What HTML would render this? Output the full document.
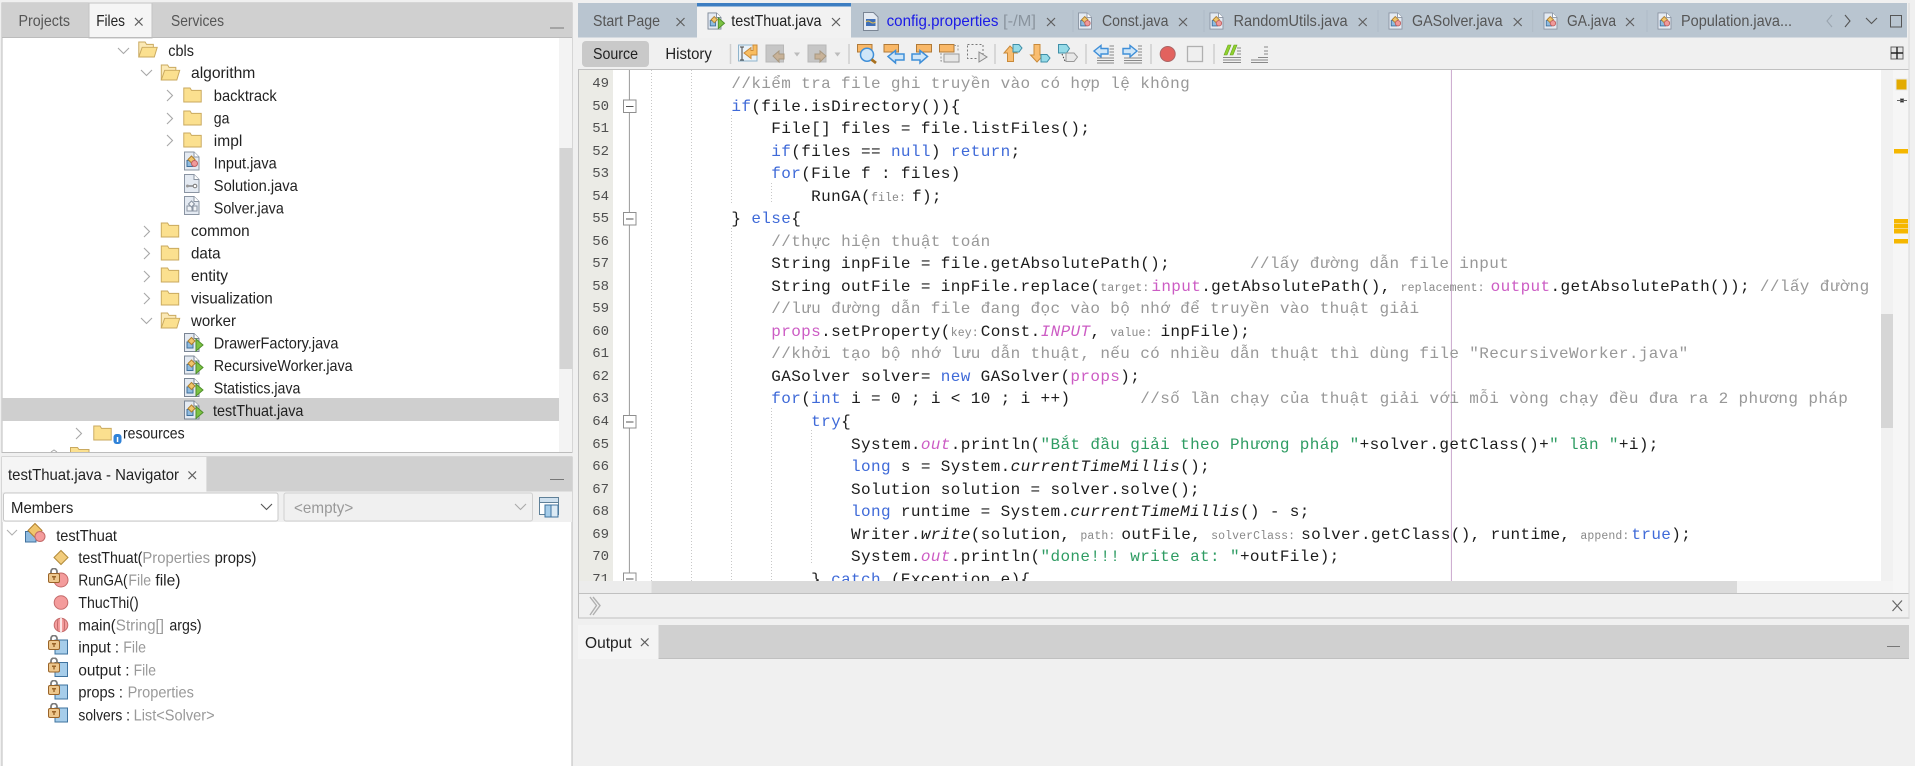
<!DOCTYPE html>
<html><head><meta charset="utf-8"><title>NetBeans</title>
<style>
html,body{margin:0;padding:0;background:#f0f0f0;width:1915px;height:766px;overflow:hidden}
#root{position:relative;width:1915px;height:766px;overflow:hidden}
svg{position:absolute;left:0;top:0}
svg text{font-family:"Liberation Sans",sans-serif;font-size:16px;fill:#222}
svg text.g{fill:#999}
svg text.d{fill:#555}
#code,#nums{position:absolute;margin:0;font-family:"Liberation Mono",monospace;white-space:pre;line-height:22.53px}
#clip{position:absolute;left:651.6px;top:71px;width:1229px;height:510px;overflow:hidden}
#code{left:0;top:2px;font-size:16px;letter-spacing:.37px;color:#1c1c1c}
#nc{position:absolute;left:578px;top:71px;width:31px;height:510px;overflow:hidden}
#nums{left:0;top:2px;width:31px;text-align:right;font-size:14px;color:#4f4f4f}
.c{color:#989898}.k{color:#3f6ad8}.s{color:#2f9c63}.f{color:#cc5cc4}.i{font-style:italic}
.h{font-size:11.5px;letter-spacing:.1px;color:#888;line-height:0;margin-right:6px}
.n{margin-right:2px}
</style></head><body><div id="root">
<svg width="1915" height="766" viewBox="0 0 1915 766" xmlns="http://www.w3.org/2000/svg">
<defs>
<symbol id="fc" viewBox="0 0 19 16"><path d="M.5 15.5V1h6.5l1.500 2.500h10v12z" fill="#fbe08f" stroke="#c9a95f"/></symbol>
<symbol id="fo" viewBox="0 0 20 17"><path d="M.5 16.500V1h6.500l1.500 2.500h7v3" fill="#fbe9b5" stroke="#c9a95f"/><path d="M.5 16.500L4 6.500h15.500l-3 10z" fill="#fbe08f" stroke="#c9a95f"/></symbol>
<symbol id="cl" viewBox="0 0 20 19"><path d="M.5.5h9.500l5 5v13H.5z" fill="#e4eaf2" stroke="#8a94a2"/><path d="M10 .5v5h5" fill="#fff" stroke="#8a94a2"/><rect x="3" y="9" width="6" height="6" fill="#8fbbe0" stroke="#40709c"/><path d="M7.500 4.500l3.500 3.500-3.500 3.500L4 8z" fill="#f0c56c" stroke="#b08030"/><circle cx="10.500" cy="12" r="3" fill="#f09a9a" stroke="#c06060"/></symbol>
<symbol id="ru" viewBox="0 0 20 19"><path d="M.5.5h9.500l5 5v13H.5z" fill="#e4eaf2" stroke="#7a8594"/><path d="M10 .5v5h5" fill="#fff" stroke="#7a8594"/><rect x="3" y="9" width="6" height="6" fill="#8fbbe0" stroke="#40709c"/><path d="M7.500 4.500l3.500 3.500-3.500 3.500L4 8z" fill="#f0c56c" stroke="#b08030"/><path d="M12 6l7 6-7 6z" fill="#7cc243" stroke="#4e8f2a"/></symbol>
<symbol id="lk" viewBox="0 0 12 15"><path d="M3 6V3.500a3 3 0 0 1 6 0V6" fill="none" stroke="#7c7c7c" stroke-width="1.800"/><rect x=".5" y="5.500" width="11" height="9" rx="1.500" fill="#edc78d" stroke="#9a6428"/><rect x="4" y="8" width="4" height="1.500" fill="#9a6428"/><rect x="5.300" y="9" width="1.400" height="3" fill="#9a6428"/></symbol>
<symbol id="x" viewBox="0 0 10 10"><path d="M1 1l8 8M9 1l-8 8" stroke="#5f5f5f" stroke-width="1.200" fill="none"/></symbol>
</defs>

<!-- LEFT TOP PANEL -->
<rect x="2" y="3" width="570" height="449.500" fill="#fff" stroke="#bcbcbc"/>
<rect x="2" y="3" width="570" height="34.500" fill="#d0d0d0"/>
<rect x="89" y="3" width="63" height="35" fill="#f5f5f5" stroke="#c4c4c4"/>
<line x1="2" y1="37.500" x2="572" y2="37.500" stroke="#bcbcbc"/>
<text class="d" x="18.500" y="26" textLength="51.500" lengthAdjust="spacingAndGlyphs">Projects</text>
<text x="96.200" y="26" textLength="28.800" lengthAdjust="spacingAndGlyphs">Files</text>
<use href="#x" x="134" y="17" width="9.500" height="9.500"/>
<text class="d" x="171" y="26" textLength="53" lengthAdjust="spacingAndGlyphs">Services</text>
<line x1="550" y1="28" x2="564" y2="28" stroke="#777"/>
<rect x="559" y="38" width="13" height="414" fill="#f3f3f3"/>
<rect x="559.500" y="148" width="12.500" height="221" fill="#d4d4d4"/>
<rect x="2" y="398" width="557" height="23" fill="#cfcfcf"/>

<g fill="none" stroke="#a8a8a8" stroke-width="1.100">
<path d="M118 48l5.500 5.500 5.500-5.500M141 70l5.500 5.500 5.500-5.500M141 318l5.500 5.500 5.500-5.500"/>
<path d="M167 90l5.500 5.500-5.500 5.500M167 113l5.500 5.500-5.500 5.500M167 135l5.500 5.500-5.500 5.500"/>
<path d="M144 226l5.500 5.500-5.500 5.500M144 248l5.500 5.500-5.500 5.500M144 271l5.500 5.500-5.500 5.500M144 293l5.500 5.500-5.500 5.500"/>
<path d="M76 428l5.500 5.500-5.500 5.500"/>
</g>
<use href="#fo" x="138" y="41" width="20" height="16.500"/>
<use href="#fo" x="160.500" y="64" width="20" height="16.500"/>
<use href="#fc" x="183" y="87" width="19" height="15.500"/>
<use href="#fc" x="183" y="110" width="19" height="15.500"/>
<use href="#fc" x="183" y="132" width="19" height="15.500"/>
<use href="#cl" x="184" y="151.500" width="20" height="19"/>
<g><path d="M184.500 174.500h9.500l5 5v13h-14.500z" fill="#e4eaf2" stroke="#8a94a2"/><path d="M194 174.500v5h5" fill="#fff" stroke="#8a94a2"/><path d="M187 186h6" stroke="#777" stroke-width="1.300"/><circle cx="195" cy="186" r="1.800" fill="#fff" stroke="#777"/><circle cx="187.500" cy="186" r="1.500" fill="#999"/></g>
<g><path d="M184.500 196.500h9.500l5 5v13h-14.500z" fill="#e4eaf2" stroke="#8a94a2"/><path d="M194 196.500v5h5" fill="#fff" stroke="#8a94a2"/><rect x="187" y="206" width="5" height="5" fill="#f2f5f8" stroke="#8a94a2"/><rect x="193" y="206" width="4" height="5" fill="#f2f5f8" stroke="#8a94a2"/><path d="M191.500 201l3 3-3 3-3-3z" fill="#f2f5f8" stroke="#8a94a2"/></g>
<use href="#fc" x="160.500" y="222" width="19" height="15.500"/>
<use href="#fc" x="160.500" y="245" width="19" height="15.500"/>
<use href="#fc" x="160.500" y="267" width="19" height="15.500"/>
<use href="#fc" x="160.500" y="290" width="19" height="15.500"/>
<use href="#fo" x="160.500" y="312" width="20" height="16.500"/>
<use href="#ru" x="184" y="333" width="20" height="19"/>
<use href="#ru" x="184" y="355.500" width="20" height="19"/>
<use href="#ru" x="184" y="378" width="20" height="19"/>
<use href="#ru" x="184" y="400.500" width="20" height="19"/>
<use href="#fc" x="93" y="425" width="19" height="15.500"/>
<rect x="113.500" y="434" width="8" height="10" rx="3" fill="#2f82d8"/><rect x="116.800" y="437" width="1.500" height="5" fill="#fff"/>
<path d="M70.500 452v-4.500h7l1.500 2h10v2.500" fill="#fbe08f" stroke="#c9a95f"/>
<path d="M51 452l3-2 3 2" fill="none" stroke="#a8a8a8"/>

<text x="168.300" y="56" textLength="25.600" lengthAdjust="spacingAndGlyphs">cbls</text>
<text x="191" y="78" textLength="64.300" lengthAdjust="spacingAndGlyphs">algorithm</text>
<text x="213.800" y="101" textLength="62.900" lengthAdjust="spacingAndGlyphs">backtrack</text>
<text x="213.800" y="123.500" textLength="15.600" lengthAdjust="spacingAndGlyphs">ga</text>
<text x="213.800" y="146" textLength="28.500" lengthAdjust="spacingAndGlyphs">impl</text>
<text x="213.800" y="168.500" textLength="62.900" lengthAdjust="spacingAndGlyphs">Input.java</text>
<text x="213.800" y="191" textLength="84" lengthAdjust="spacingAndGlyphs">Solution.java</text>
<text x="213.800" y="213.500" textLength="70" lengthAdjust="spacingAndGlyphs">Solver.java</text>
<text x="191" y="236" textLength="58.700" lengthAdjust="spacingAndGlyphs">common</text>
<text x="191" y="258.500" textLength="29.500" lengthAdjust="spacingAndGlyphs">data</text>
<text x="191" y="281" textLength="37" lengthAdjust="spacingAndGlyphs">entity</text>
<text x="191" y="303.500" textLength="81.700" lengthAdjust="spacingAndGlyphs">visualization</text>
<text x="191" y="326" textLength="45" lengthAdjust="spacingAndGlyphs">worker</text>
<text x="213.800" y="348.500" textLength="124.700" lengthAdjust="spacingAndGlyphs">DrawerFactory.java</text>
<text x="213.800" y="371" textLength="138.800" lengthAdjust="spacingAndGlyphs">RecursiveWorker.java</text>
<text x="213.800" y="393.500" textLength="86.600" lengthAdjust="spacingAndGlyphs">Statistics.java</text>
<text x="213" y="416" textLength="90.400" lengthAdjust="spacingAndGlyphs">testThuat.java</text>
<text x="123" y="438.500" textLength="61.600" lengthAdjust="spacingAndGlyphs">resources</text>

<!-- NAVIGATOR -->
<rect x="2" y="457" width="570" height="320" fill="#fff" stroke="#bcbcbc"/>
<rect x="2" y="457" width="570" height="65" fill="#f0f0f0"/>
<rect x="2" y="457" width="570" height="34.500" fill="#d0d0d0"/>
<rect x="2" y="457" width="204.400" height="35" fill="#f5f5f5"/>
<text x="8" y="480" textLength="171" lengthAdjust="spacingAndGlyphs">testThuat.java - Navigator</text>
<use href="#x" x="187.500" y="470.500" width="9.500" height="9.500"/>
<line x1="550" y1="479.500" x2="564" y2="479.500" stroke="#777"/>
<rect x="3.500" y="493" width="274.500" height="28" rx="2" fill="#fff" stroke="#c8c8c8"/>
<text x="11" y="513" textLength="62.300" lengthAdjust="spacingAndGlyphs">Members</text>
<path d="M261 504l5.500 5.500 5.500-5.500" fill="none" stroke="#555" stroke-width="1.100"/>
<rect x="284" y="493" width="248.500" height="28" rx="2" fill="#f0f0f0" stroke="#d0d0d0"/>
<text class="g" x="294" y="513" textLength="59.300" lengthAdjust="spacingAndGlyphs">&lt;empty&gt;</text>
<path d="M515 504l5.500 5.500 5.500-5.500" fill="none" stroke="#aaa" stroke-width="1.100"/>
<g><rect x="539.500" y="497.500" width="19" height="5" fill="#cfe0ee" stroke="#5f8098"/><rect x="539.500" y="502.500" width="19" height="12" fill="#fff" stroke="#5f8098"/><rect x="545" y="505" width="6" height="12" fill="#a6cdea" stroke="#3f739f"/><rect x="551" y="505" width="7" height="12" fill="#dceaf4" stroke="#3f739f"/></g>

<path d="M7 530l5 5 5-5" fill="none" stroke="#b0b0b0" stroke-width="1.100"/>
<rect x="25.500" y="531.500" width="10.500" height="10.500" fill="#8fbbe0" stroke="#40709c"/>
<path d="M35 523.500l7 7-7 7-7-7z" fill="#f0c56c" stroke="#b08030"/>
<circle cx="40" cy="536.500" r="5" fill="#f49c9c" stroke="#c46a6a"/>
<text x="56.200" y="541" textLength="60.800" lengthAdjust="spacingAndGlyphs">testThuat</text>

<path d="M61 550.500l7 7-7 7-7-7z" fill="#f2cc7c" stroke="#b08a3a"/>
<text x="78.400" y="563" textLength="64" lengthAdjust="spacingAndGlyphs">testThuat(</text>
<text class="g" x="142.400" y="563" textLength="67.600" lengthAdjust="spacingAndGlyphs">Properties</text>
<text x="214.600" y="563" textLength="41.800" lengthAdjust="spacingAndGlyphs">props)</text>

<circle cx="61" cy="580" r="7" fill="#f49c9c" stroke="#c46a6a"/>
<use href="#lk" x="48" y="568" width="12" height="15"/>
<text x="78.400" y="585.500" textLength="49.200" lengthAdjust="spacingAndGlyphs">RunGA(</text>
<text class="g" x="128.400" y="585.500" textLength="22.600" lengthAdjust="spacingAndGlyphs">File</text>
<text x="155.400" y="585.500" textLength="25.100" lengthAdjust="spacingAndGlyphs">file)</text>

<circle cx="61" cy="602.500" r="6.800" fill="#f49c9c" stroke="#c46a6a"/>
<text x="78.400" y="608" textLength="60.300" lengthAdjust="spacingAndGlyphs">ThucThi()</text>

<circle cx="61" cy="625" r="6.800" fill="#f49c9c" stroke="#c46a6a"/><path d="M61 618v14" stroke="#fff" stroke-width="1.500"/><path d="M58 619q-1 6 0 12M64 619q1 6 0 12" stroke="#c46a6a" fill="none"/>
<text x="78.400" y="630.500" textLength="37.400" lengthAdjust="spacingAndGlyphs">main(</text>
<text class="g" x="115.800" y="630.500" textLength="48.200" lengthAdjust="spacingAndGlyphs">String[]</text>
<text x="169.400" y="630.500" textLength="32.200" lengthAdjust="spacingAndGlyphs">args)</text>

<rect x="55" y="640" width="12.500" height="14" fill="#a6cdea" stroke="#3f739f"/><use href="#lk" x="48" y="635" width="12" height="15"/>
<text x="78.400" y="652.500" textLength="40.600" lengthAdjust="spacingAndGlyphs">input :</text>
<text class="g" x="123.200" y="652.500" textLength="22.800" lengthAdjust="spacingAndGlyphs">File</text>

<rect x="55" y="662.500" width="12.500" height="14" fill="#a6cdea" stroke="#3f739f"/><use href="#lk" x="48" y="657.500" width="12" height="15"/>
<text x="78.400" y="675.500" textLength="51.100" lengthAdjust="spacingAndGlyphs">output :</text>
<text class="g" x="133.600" y="675.500" textLength="22.400" lengthAdjust="spacingAndGlyphs">File</text>

<rect x="55" y="685" width="12.500" height="14" fill="#a6cdea" stroke="#3f739f"/><use href="#lk" x="48" y="680" width="12" height="15"/>
<text x="78.400" y="697.500" textLength="44.600" lengthAdjust="spacingAndGlyphs">props :</text>
<text class="g" x="127.600" y="697.500" textLength="66.300" lengthAdjust="spacingAndGlyphs">Properties</text>

<rect x="55" y="708" width="12.500" height="14" fill="#a6cdea" stroke="#3f739f"/><use href="#lk" x="48" y="703" width="12" height="15"/>
<text x="78.400" y="720.500" textLength="51.600" lengthAdjust="spacingAndGlyphs">solvers :</text>
<text class="g" x="133.600" y="720.500" textLength="81" lengthAdjust="spacingAndGlyphs">List&lt;Solver&gt;</text>

<!-- EDITOR TABS -->
<rect x="578" y="3" width="1329" height="34.500" fill="#b9c5d0"/>
<rect x="697" y="3" width="154" height="35" fill="#f2f2f2"/>
<rect x="697" y="3" width="154" height="3.500" fill="#3d7ec2"/>
<text class="d" x="593" y="26" textLength="67" lengthAdjust="spacingAndGlyphs">Start Page</text>
<use href="#x" x="675.500" y="17" width="10" height="10"/>
<use href="#ru" x="707.500" y="12.500" width="18" height="17"/>
<text x="731.300" y="26" textLength="90.200" lengthAdjust="spacingAndGlyphs">testThuat.java</text>
<use href="#x" x="831" y="17" width="10" height="10"/>
<g><path d="M863.500 12.500h10l4.500 4.500v13.500h-14.500z" fill="#e4eaf2" stroke="#7a8594"/><rect x="866" y="19" width="9.500" height="7" fill="#3f6fb8"/><path d="M866 22q2-2 4.500 0t5 0" stroke="#e8c04a" fill="none"/></g>
<text x="886.600" y="26" textLength="111.800" style="fill:#1a1ae6" lengthAdjust="spacingAndGlyphs">config.properties</text>
<text x="1003" y="26" textLength="33" style="fill:#8a949e" lengthAdjust="spacingAndGlyphs">[-/M]</text>
<use href="#x" x="1046" y="17" width="10" height="10"/>
<use href="#cl" x="1078" y="12.500" width="18" height="17"/>
<text class="d" x="1102" y="26" textLength="66.400" lengthAdjust="spacingAndGlyphs">Const.java</text>
<use href="#x" x="1178" y="17" width="10" height="10"/>
<use href="#cl" x="1209.500" y="12.500" width="18" height="17"/>
<text class="d" x="1233.500" y="26" textLength="114.100" lengthAdjust="spacingAndGlyphs">RandomUtils.java</text>
<use href="#x" x="1357.700" y="17" width="10" height="10"/>
<use href="#cl" x="1388.500" y="12.500" width="18" height="17"/>
<text class="d" x="1412" y="26" textLength="90.600" lengthAdjust="spacingAndGlyphs">GASolver.java</text>
<use href="#x" x="1512.700" y="17" width="10" height="10"/>
<use href="#cl" x="1543.500" y="12.500" width="18" height="17"/>
<text class="d" x="1567" y="26" textLength="49" lengthAdjust="spacingAndGlyphs">GA.java</text>
<use href="#x" x="1625" y="17" width="10" height="10"/>
<use href="#cl" x="1657.500" y="12.500" width="18" height="17"/>
<text class="d" x="1681" y="26" textLength="111" lengthAdjust="spacingAndGlyphs">Population.java...</text>
<g stroke="#b0bcc7"><line x1="1073" y1="10" x2="1073" y2="32"/><line x1="1378" y1="10" x2="1378" y2="32"/><line x1="1532.700" y1="10" x2="1532.700" y2="32"/><line x1="1647" y1="10" x2="1647" y2="32"/><line x1="1204" y1="10" x2="1204" y2="32"/></g>
<path d="M1832 15l-5 6 5 6" fill="none" stroke="#9aa5af" stroke-width="1.100"/>
<path d="M1845 15l5 6-5 6" fill="none" stroke="#555" stroke-width="1.100"/>
<path d="M1866 18l5.500 5.500 5.500-5.500" fill="none" stroke="#555" stroke-width="1.100"/>
<rect x="1890.500" y="15.500" width="11" height="11.500" fill="none" stroke="#555"/>

<!-- TOOLBAR -->
<rect x="578" y="38" width="1331" height="31" fill="#f0f0f0"/>
<line x1="578" y1="69.500" x2="1909" y2="69.500" stroke="#c0c0c0"/>
<rect x="582" y="41" width="67" height="26" rx="4" fill="#c9c9c9"/>
<text x="593" y="59" textLength="45" lengthAdjust="spacingAndGlyphs">Source</text>
<text x="665.400" y="59" textLength="46.400" lengthAdjust="spacingAndGlyphs">History</text>
<g stroke="#cfcfcf" stroke-width="1.500"><line x1="730.500" y1="44" x2="730.500" y2="64"/><line x1="849" y1="44" x2="849" y2="64"/><line x1="995" y1="44" x2="995" y2="64"/><line x1="1086" y1="44" x2="1086" y2="64"/><line x1="1151" y1="44" x2="1151" y2="64"/><line x1="1214" y1="44" x2="1214" y2="64"/></g>
<!-- go to last edit -->
<rect x="738.500" y="45" width="18.500" height="16" fill="#eaf2f8" stroke="#8fb4cc"/><path d="M740 47h4M740 60h4M742 47v13" stroke="#444" fill="none"/><path d="M757 45v10h-6v3.500l-7-5.500 7-5.500v3h2v-5.500z" fill="#f9bd60" stroke="#c98a3a"/>
<!-- back / forward gray -->
<rect x="766" y="45" width="17.500" height="17" fill="#c6c6c6" stroke="#b8b8b8"/><path d="M773 56l6-5v3h5v5h-5v3z" fill="#c8b298" stroke="#a89880"/>
<path d="M794 52.500h6l-3 4z" fill="#bbb"/>
<rect x="808" y="45" width="18" height="17" fill="#c6c6c6" stroke="#b8b8b8"/><path d="M826 56l-6-5v3h-5v5h5v3z" fill="#c8b298" stroke="#a89880"/>
<path d="M834.500 52.500h6l-3 4z" fill="#bbb"/>
<!-- find -->
<rect x="857.500" y="44.500" width="14.500" height="7.500" fill="#f9b868" stroke="#b07a38"/>
<circle cx="867" cy="54.700" r="6.500" fill="#cfe6f8" stroke="#3f8fd8" stroke-width="1.500"/><path d="M871.500 59.500l4.500 3.500" stroke="#a8701f" stroke-width="2.800"/>
<!-- find prev/next -->
<rect x="884" y="44.500" width="14.500" height="7.500" fill="#f9b868" stroke="#b07a38"/>
<path d="M888 56.500l7.500-6v3.500h8.500v6h-8.500v3z" fill="#cfe6f8" stroke="#3f8fd8" stroke-width="1.500"/>
<rect x="916.500" y="44.500" width="15" height="7.500" fill="#f9b868" stroke="#b07a38"/>
<path d="M927.500 56.500l-7.500-6v3.500h-8v6h8v3z" fill="#cfe6f8" stroke="#3f8fd8" stroke-width="1.500"/>
<!-- highlight -->
<rect x="939.500" y="44.500" width="14.500" height="7.500" fill="#f9b868" stroke="#b07a38"/>
<rect x="944" y="54" width="15" height="8" fill="#e6e6e6" stroke="#999"/>
<path d="M954 45.500h4v6M941 53v8h2" fill="none" stroke="#999" stroke-dasharray="2 1.500"/>
<!-- rect sel -->
<rect x="967.500" y="44.500" width="15.500" height="14" fill="none" stroke="#777" stroke-dasharray="2 2"/>
<path d="M979 52l8 5-8 5z" fill="#e6e6e6" stroke="#888"/>
<!-- bookmarks -->
<path d="M1010 46l7 7h-3.500v8.500h-6V53H1004z" fill="#f9bd70" stroke="#c98a3a"/>
<path d="M1013 44.500h6l3 3.500-3 4h-6z" fill="#96dbe8" stroke="#3f8fa8"/>
<path d="M1037 62l6.500-7h-3.500v-10.500h-6V55H1030.500z" fill="#f9bd70" stroke="#c98a3a"/>
<path d="M1041 54.500h6l3 3.500-3 4h-6z" fill="#96dbe8" stroke="#3f8fa8"/>
<path d="M1058.500 44.500h8l3 4-3 4.500h-8z" fill="#96dbe8" stroke="#3f8fa8"/>
<path d="M1066 53h8l3.500 4-3.500 4.500h-8z" fill="#e8e8e8" stroke="#999"/>
<path d="M1062 54l3 7" stroke="#444" stroke-dasharray="1.500 1.500"/>
<!-- shift -->
<path d="M1094 51l7-5.500v3h7v5.500h-7v3z" fill="#cfe6f8" stroke="#3f8fd8" stroke-width="1.400"/>
<path d="M1109.500 46h4.500M1109.500 49h4.500M1109.500 52h4.500M1109.500 55h4.500M1097 58h17M1097 60.500h17M1097 63h17" stroke="#888"/>
<path d="M1137 51l-7-5.500v3h-7v5.500h7v3z" fill="#cfe6f8" stroke="#3f8fd8" stroke-width="1.400"/>
<path d="M1138 46h4M1138 49h4M1138 52h4M1138 55h4M1124 58h18M1124 60.500h18M1124 63h18" stroke="#888"/>
<!-- record/stop -->
<circle cx="1167.700" cy="54" r="7.500" fill="#e2625e" stroke="#a66"/>
<rect x="1187.500" y="46.500" width="15" height="15" fill="#efefef" stroke="#b0b0b0" stroke-width="1.300"/>
<!-- comment -->
<path d="M1224 55l4-10h3l-4 10zM1230 55l4-10h3l-4 10z" fill="#8fd22e" stroke="#68a01e" stroke-width=".6"/>
<path d="M1237 48h4M1237 51h4M1237 54h4M1223 57.500h18M1223 60h18M1223 62.500h18" stroke="#888"/>
<path d="M1264 47h4M1264 51h4M1264 54h4M1258 57.500h10M1251 60h17M1251 62.500h17" stroke="#888"/>
<!-- split -->
<rect x="1891" y="47" width="12" height="12" fill="#e6e6e6" stroke="#666"/><path d="M1897 47v12M1891 53h12" stroke="#222" stroke-width="1.400"/>

<!-- EDITOR BG -->
<rect x="579" y="70" width="1330" height="511" fill="#fff"/>
<rect x="579" y="70" width="34" height="511" fill="#ebebe6"/>
<line x1="629.400" y1="70" x2="629.400" y2="581" stroke="#9a9a9a"/>
<g fill="#fff" stroke="#8f8f8f"><rect x="623.500" y="100" width="12.500" height="12.500"/><rect x="623.500" y="212.500" width="12.500" height="12.500"/><rect x="623.500" y="415.500" width="12.500" height="12.500"/><rect x="623.500" y="573" width="12.500" height="12.500"/></g>
<g stroke="#555"><line x1="626" y1="106.500" x2="633.500" y2="106.500"/><line x1="626" y1="219" x2="633.500" y2="219"/><line x1="626" y1="422" x2="633.500" y2="422"/><line x1="626" y1="579" x2="633.500" y2="579"/></g>
<g stroke="#c8c8c8" stroke-dasharray="1 2"><line x1="651.500" y1="70" x2="651.500" y2="581"/><line x1="691.500" y1="70" x2="691.500" y2="581"/><line x1="731.500" y1="115" x2="731.500" y2="205"/><line x1="731.500" y1="228" x2="731.500" y2="581"/><line x1="771.500" y1="183" x2="771.500" y2="204"/><line x1="771.500" y1="408" x2="771.500" y2="581"/><line x1="811.500" y1="430" x2="811.500" y2="565"/></g>
<line x1="1451.400" y1="70" x2="1451.400" y2="581" stroke="#c9a6cc"/>

<!-- right stripes -->
<rect x="1881" y="70" width="12" height="511" fill="#f1f1f1"/>
<rect x="1881" y="314" width="12" height="114" fill="#d6d6d6"/>
<rect x="1893" y="70" width="16" height="523" fill="#f6f6f6"/>
<rect x="1896" y="79" width="11" height="11" fill="#e3ab00" stroke="#e8e8e8"/>
<path d="M1897 100.500h10M1900.500 99h3v3h-3z" stroke="#666"/>
<g fill="#f5b700"><rect x="1894" y="149" width="14" height="4.500"/><rect x="1894" y="219" width="14" height="4.500"/><rect x="1894" y="224" width="14" height="4.500"/><rect x="1894" y="229" width="14" height="4.500"/><rect x="1894" y="239" width="14" height="4.500"/></g>
<!-- h scroll -->
<rect x="579" y="581" width="1314" height="12" fill="#f4f4f4"/>
<rect x="579" y="581" width="72.500" height="12" fill="#ececec"/>
<rect x="651.500" y="581" width="1085.500" height="12" fill="#dadada"/>
<!-- breadcrumb -->
<rect x="578.500" y="593.500" width="1330.500" height="24.500" fill="#f0f0f0" stroke="#c0c0c0"/>
<path d="M590 597l6.500 8.500-6.500 9.500M593 597l7 8.500-7 9.500" fill="none" stroke="#b0b0b0" stroke-width="1.400"/>
<path d="M1892.500 600.500l9.500 10.500M1902 600.500l-9.500 10.500" stroke="#666" stroke-width="1.200"/>
<line x1="578.500" y1="70" x2="578.500" y2="594" stroke="#c0c0c0"/>
<line x1="1909" y1="3" x2="1909" y2="618" stroke="#d8d8d8"/>

<!-- OUTPUT -->
<rect x="578" y="625" width="1331" height="33" fill="#d0d0d0"/>
<line x1="578" y1="658.500" x2="1909" y2="658.500" stroke="#c0c0c0"/>
<rect x="578" y="625" width="80.500" height="34" fill="#f4f4f4"/>
<text x="585" y="648" textLength="46.600" lengthAdjust="spacingAndGlyphs">Output</text>
<use href="#x" x="640" y="637.500" width="9.500" height="9.500"/>
<line x1="1887" y1="646.500" x2="1900" y2="646.500" stroke="#777"/>
</svg>

<div id="nc"><pre id="nums">49
50
51
52
53
54
55
56
57
58
59
60
61
62
63
64
65
66
67
68
69
70
71</pre></div>
<div id="clip"><pre id="code">        <span class="c">//kiểm tra file ghi truyền vào có hợp lệ không</span>
        <span class="k">if</span>(file.isDirectory()){
            File[] files = file.listFiles();
            <span class="k">if</span>(files == <span class="k">null</span>) <span class="k">return</span>;
            <span class="k">for</span>(File f : files)
                RunGA(<span class="h">file:</span>f);
        } <span class="k">else</span>{
            <span class="c">//thực hiện thuật toán</span>
            String inpFile = file.getAbsolutePath();        <span class="c">//lấy đường dẫn file input</span>
            String outFile = inpFile.replace(<span class="h n">target:</span><span class="f">input</span>.getAbsolutePath(), <span class="h">replacement:</span><span class="f">output</span>.getAbsolutePath()); <span class="c">//lấy đường</span>
            <span class="c">//lưu đường dẫn file đang đọc vào bộ nhớ để truyền vào thuật giải</span>
            <span class="f">props</span>.setProperty(<span class="h n">key:</span>Const.<span class="f i">INPUT</span>, <span class="h" style="margin-right:8px">value:</span>inpFile);
            <span class="c">//khởi tạo bộ nhớ lưu dẫn thuật, nếu có nhiều dẫn thuật thì dùng file "RecursiveWorker.java"</span>
            GASolver solver= <span class="k">new</span> GASolver(<span class="f">props</span>);
            <span class="k">for</span>(<span class="k">int</span> i = 0 ; i &lt; 10 ; i ++)       <span class="c">//số lần chạy của thuật giải với mỗi vòng chạy đều đưa ra 2 phương pháp</span>
                <span class="k">try</span>{
                    System.<span class="f i">out</span>.println(<span class="s">"Bắt đầu giải theo Phương pháp "</span>+solver.getClass()+<span class="s">" lần "</span>+i);
                    <span class="k">long</span> s = System.<span class="i">currentTimeMillis</span>();
                    Solution solution = solver.solve();
                    <span class="k">long</span> runtime = System.<span class="i">currentTimeMillis</span>() - s;
                    Writer.<span class="i">write</span>(solution, <span class="h">path:</span>outFile, <span class="h">solverClass:</span>solver.getClass(), runtime, <span class="h n">append:</span><span class="k">true</span>);
                    System.<span class="f i">out</span>.println(<span class="s">"done!!! write at: "</span>+outFile);
                } <span class="k">catch</span> (Exception e){</pre></div>
</div></body></html>
